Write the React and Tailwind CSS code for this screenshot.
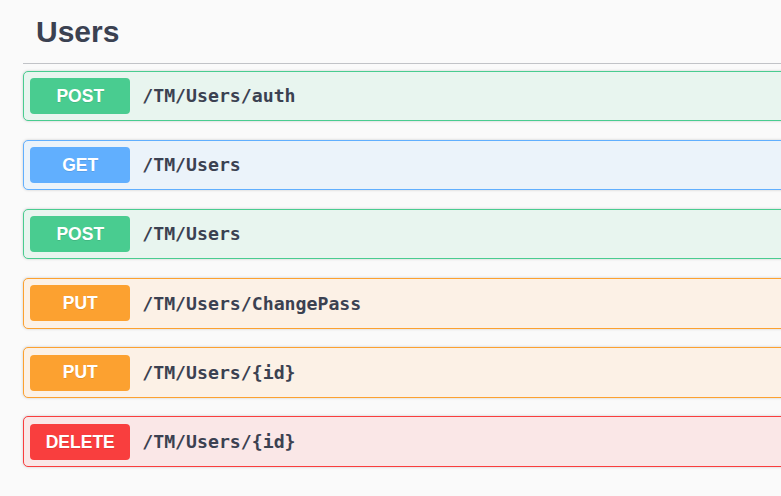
import React from 'react'

const ops = [
  { method: 'POST', path: '/TM/Users/auth', badge: 'bg-[#49cc90]', row: 'bg-[#e8f5ef] border-[#49cc90]' },
  { method: 'GET', path: '/TM/Users', badge: 'bg-[#61affe]', row: 'bg-[#ebf3fa] border-[#61affe]' },
  { method: 'POST', path: '/TM/Users', badge: 'bg-[#49cc90]', row: 'bg-[#e8f5ef] border-[#49cc90]' },
  { method: 'PUT', path: '/TM/Users/ChangePass', badge: 'bg-[#fca130]', row: 'bg-[#fcf1e6] border-[#fca130]' },
  { method: 'PUT', path: '/TM/Users/{id}', badge: 'bg-[#fca130]', row: 'bg-[#fcf1e6] border-[#fca130]' },
  { method: 'DELETE', path: '/TM/Users/{id}', badge: 'bg-[#f93e3e]', row: 'bg-[#fae7e7] border-[#f93e3e]' },
]

function OpBlock({ method, path, badge, row }) {
  return (
    <div
      className={`flex items-center p-[6.25px] mb-[18.7px] border rounded-[5px] shadow-[0_0_3px_rgba(0,0,0,0.19)] ${row}`}
    >
      <span
        className={`flex items-center justify-center w-[100px] h-[36px] rounded-[4px] text-white text-[17.5px] font-bold [text-shadow:0_1px_0_rgba(0,0,0,0.1)] ${badge}`}
        style={{ fontFamily: '"Liberation Sans", Arial, sans-serif' }}
      >
        {method}
      </span>
      <span
        className="ml-[12px] text-[18.2px] font-bold text-[#3b4151]"
        style={{ fontFamily: '"DejaVu Sans Mono", monospace' }}
      >
        {path}
      </span>
    </div>
  )
}

export default function App() {
  return (
    <div className="w-[781px] h-[496px] overflow-hidden bg-[#fafafa]">
      <div className="w-[1000px] pl-[23px]">
        <div className="pl-[13px] pt-[14px] pb-[13px] border-b border-[#c1c3c7]">
          <h4
            className="text-[30px] leading-[36px] font-bold text-[#3b4151]"
            style={{ fontFamily: '"Liberation Sans", Arial, sans-serif' }}
          >
            Users
          </h4>
        </div>
        <div className="pt-[6.5px]">
          {ops.map((op, i) => (
            <OpBlock key={i} {...op} />
          ))}
        </div>
      </div>
    </div>
  )
}
